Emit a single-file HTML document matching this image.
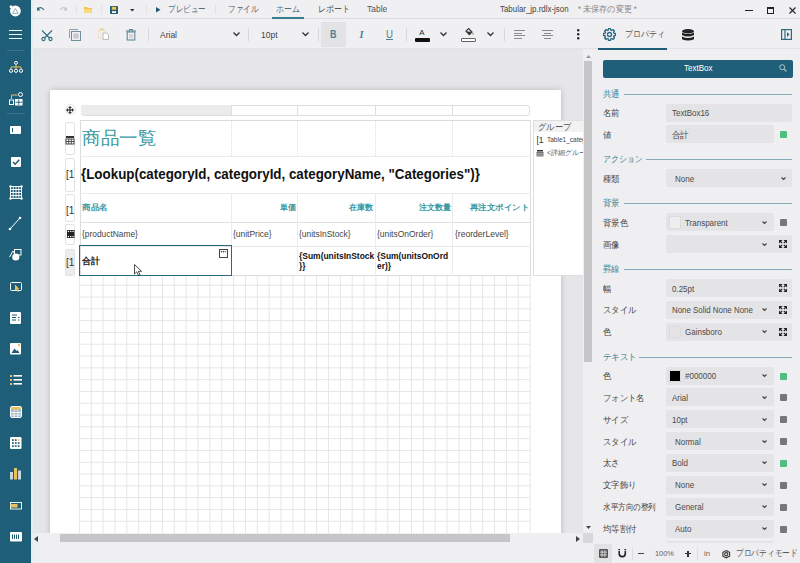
<!DOCTYPE html><html><head><meta charset="utf-8"><style>
*{box-sizing:border-box;margin:0;padding:0}
html,body{width:800px;height:563px;overflow:hidden;background:#efeef0;font-family:"Liberation Sans",sans-serif;position:relative}
.a{position:absolute}
.t{position:absolute;white-space:nowrap;line-height:1}
svg{position:absolute;overflow:visible}
</style></head><body>
<div class="a" style="left:0px;top:0px;width:31px;height:563px;background:#1f5e78"></div>
<div class="a" style="left:31px;top:0px;width:1.8px;height:563px;background:#e3eef2"></div>
<div class="a" style="left:32.8px;top:0px;width:767.2px;height:18px;background:#f0eff1"></div>
<div class="a" style="left:32.8px;top:18px;width:767.2px;height:1px;background:#dedddf"></div>
<div class="a" style="left:32.8px;top:19px;width:767.2px;height:30px;background:#f0eff1"></div>
<div class="a" style="left:32.8px;top:48px;width:767.2px;height:1px;background:#e3e2e4"></div>
<div class="a" style="left:32.8px;top:49px;width:550.2px;height:484px;background:#e6e5e7;overflow:hidden">
<div class="a" style="left:17.2px;top:41px;width:511px;height:520px;background:#fff;box-shadow:0 0 6px rgba(0,0,0,.2)"></div>
</div>
<div class="a" style="left:79px;top:276px;width:452px;height:257px;overflow:hidden"><svg style="left:0;top:0" width="460" height="260"><g stroke="#e6e6e8" stroke-width="1"><line x1="0.4000000000000057" y1="0" x2="0.4000000000000057" y2="260" /><line x1="12.260000000000005" y1="0" x2="12.260000000000005" y2="260" /><line x1="24.120000000000005" y1="0" x2="24.120000000000005" y2="260" /><line x1="35.980000000000004" y1="0" x2="35.980000000000004" y2="260" /><line x1="47.84" y1="0" x2="47.84" y2="260" /><line x1="59.69999999999999" y1="0" x2="59.69999999999999" y2="260" /><line x1="71.56" y1="0" x2="71.56" y2="260" /><line x1="83.42000000000002" y1="0" x2="83.42000000000002" y2="260" /><line x1="95.28000000000003" y1="0" x2="95.28000000000003" y2="260" /><line x1="107.14000000000004" y1="0" x2="107.14000000000004" y2="260" /><line x1="119.00000000000006" y1="0" x2="119.00000000000006" y2="260" /><line x1="130.86000000000007" y1="0" x2="130.86000000000007" y2="260" /><line x1="142.72000000000008" y1="0" x2="142.72000000000008" y2="260" /><line x1="154.5800000000001" y1="0" x2="154.5800000000001" y2="260" /><line x1="166.4400000000001" y1="0" x2="166.4400000000001" y2="260" /><line x1="178.30000000000013" y1="0" x2="178.30000000000013" y2="260" /><line x1="190.16000000000014" y1="0" x2="190.16000000000014" y2="260" /><line x1="202.02000000000015" y1="0" x2="202.02000000000015" y2="260" /><line x1="213.88000000000017" y1="0" x2="213.88000000000017" y2="260" /><line x1="225.74000000000018" y1="0" x2="225.74000000000018" y2="260" /><line x1="237.6000000000002" y1="0" x2="237.6000000000002" y2="260" /><line x1="249.4600000000002" y1="0" x2="249.4600000000002" y2="260" /><line x1="261.3200000000002" y1="0" x2="261.3200000000002" y2="260" /><line x1="273.18000000000023" y1="0" x2="273.18000000000023" y2="260" /><line x1="285.04000000000025" y1="0" x2="285.04000000000025" y2="260" /><line x1="296.90000000000026" y1="0" x2="296.90000000000026" y2="260" /><line x1="308.7600000000003" y1="0" x2="308.7600000000003" y2="260" /><line x1="320.6200000000003" y1="0" x2="320.6200000000003" y2="260" /><line x1="332.4800000000003" y1="0" x2="332.4800000000003" y2="260" /><line x1="344.3400000000003" y1="0" x2="344.3400000000003" y2="260" /><line x1="356.20000000000033" y1="0" x2="356.20000000000033" y2="260" /><line x1="368.06000000000034" y1="0" x2="368.06000000000034" y2="260" /><line x1="379.92000000000036" y1="0" x2="379.92000000000036" y2="260" /><line x1="391.78000000000037" y1="0" x2="391.78000000000037" y2="260" /><line x1="403.6400000000004" y1="0" x2="403.6400000000004" y2="260" /><line x1="415.5000000000004" y1="0" x2="415.5000000000004" y2="260" /><line x1="427.3600000000004" y1="0" x2="427.3600000000004" y2="260" /><line x1="439.22000000000037" y1="0" x2="439.22000000000037" y2="260" /><line x1="451.0800000000004" y1="0" x2="451.0800000000004" y2="260" /><line x1="0" y1="9.25" x2="451.5" y2="9.25" /><line x1="0" y1="21.05000000000001" x2="451.5" y2="21.05000000000001" /><line x1="0" y1="32.85000000000002" x2="451.5" y2="32.85000000000002" /><line x1="0" y1="44.650000000000034" x2="451.5" y2="44.650000000000034" /><line x1="0" y1="56.450000000000045" x2="451.5" y2="56.450000000000045" /><line x1="0" y1="68.25000000000006" x2="451.5" y2="68.25000000000006" /><line x1="0" y1="80.05000000000007" x2="451.5" y2="80.05000000000007" /><line x1="0" y1="91.85000000000008" x2="451.5" y2="91.85000000000008" /><line x1="0" y1="103.65000000000009" x2="451.5" y2="103.65000000000009" /><line x1="0" y1="115.4500000000001" x2="451.5" y2="115.4500000000001" /><line x1="0" y1="127.25000000000011" x2="451.5" y2="127.25000000000011" /><line x1="0" y1="139.05000000000013" x2="451.5" y2="139.05000000000013" /><line x1="0" y1="150.85000000000014" x2="451.5" y2="150.85000000000014" /><line x1="0" y1="162.65000000000015" x2="451.5" y2="162.65000000000015" /><line x1="0" y1="174.45000000000016" x2="451.5" y2="174.45000000000016" /><line x1="0" y1="186.25000000000017" x2="451.5" y2="186.25000000000017" /><line x1="0" y1="198.05000000000018" x2="451.5" y2="198.05000000000018" /><line x1="0" y1="209.8500000000002" x2="451.5" y2="209.8500000000002" /><line x1="0" y1="221.6500000000002" x2="451.5" y2="221.6500000000002" /><line x1="0" y1="233.45000000000022" x2="451.5" y2="233.45000000000022" /><line x1="0" y1="245.25000000000023" x2="451.5" y2="245.25000000000023" /></g></svg></div>
<div class="a" style="left:80.5px;top:104.5px;width:449px;height:11px;background:#fff;border:1px solid #dedede;border-radius:3px"></div>
<div class="a" style="left:81px;top:105px;width:150px;height:10px;background:#ebebeb;border-radius:2px 0 0 2px"></div>
<div class="a" style="left:231px;top:105px;width:1px;height:10px;background:#dedede"></div>
<div class="a" style="left:297px;top:105px;width:1px;height:10px;background:#dedede"></div>
<div class="a" style="left:375px;top:105px;width:1px;height:10px;background:#dedede"></div>
<div class="a" style="left:452px;top:105px;width:1px;height:10px;background:#dedede"></div>
<div class="a" style="left:64.5px;top:104px;width:11px;height:11px;border-radius:50%;border:1px solid #e2e2e2;background:#fff"></div>
<svg style="left:66px;top:105.5px" width="8" height="8" viewBox="0 0 8 8"><g fill="#333"><path d="M4 0 L6 2 H2 Z M4 8 L6 6 H2 Z M0 4 L2 2 V6 Z M8 4 L6 2 V6 Z"/><rect x="3.4" y="1.5" width="1.2" height="5"/><rect x="1.5" y="3.4" width="5" height="1.2"/></g></svg>
<div class="a" style="left:65px;top:121.5px;width:10px;height:33.5px;border:1px solid #e2e2e2;border-radius:2px;background:#fff"></div>
<div class="a" style="left:65px;top:157.5px;width:10px;height:34.5px;border:1px solid #e2e2e2;border-radius:2px;background:#fff"></div>
<div class="a" style="left:65px;top:193.5px;width:10px;height:28.0px;border:1px solid #e2e2e2;border-radius:2px;background:#fff"></div>
<div class="a" style="left:65px;top:223.8px;width:10px;height:21.19999999999999px;border:1px solid #e2e2e2;border-radius:2px;background:#fff"></div>
<div class="a" style="left:65px;top:248.5px;width:10px;height:27.0px;border:1px solid #e2e2e2;border-radius:2px;background:#ececec"></div>
<svg style="left:66px;top:136px" width="8" height="8" viewBox="0 0 8 8"><g fill="#333"><rect x="0" y="0" width="8" height="2"/><rect x="0" y="3" width="8" height="5" fill="none" stroke="#333" stroke-width="0.9"/><line x1="2.7" y1="3" x2="2.7" y2="8" stroke="#333" stroke-width="0.8"/><line x1="5.3" y1="3" x2="5.3" y2="8" stroke="#333" stroke-width="0.8"/><line x1="0" y1="5.5" x2="8" y2="5.5" stroke="#333" stroke-width="0.8"/></g></svg>
<svg style="left:66.5px;top:230px" width="7.5" height="8" viewBox="0 0 7.5 8"><rect x="0" y="0" width="7.5" height="8" fill="#222"/><g fill="#fff"><rect x="0.8" y="0.8" width="1.3" height="1.2"/><rect x="3.1" y="0.8" width="1.3" height="1.2"/><rect x="5.4" y="0.8" width="1.3" height="1.2"/><rect x="0.8" y="6" width="1.3" height="1.2"/><rect x="3.1" y="6" width="1.3" height="1.2"/><rect x="5.4" y="6" width="1.3" height="1.2"/></g></svg>
<div class="t" style="left:66px;top:169.5px;font-size:10px;color:#333;">[1</div>
<div class="t" style="left:66px;top:205.5px;font-size:10px;color:#333;">[1</div>
<div class="t" style="left:66px;top:257.5px;font-size:10px;color:#333;">[1</div>
<div class="a" style="left:79.5px;top:119.5px;width:451.0px;height:156.5px;border:1px solid #dcdcdc"></div>
<div class="a" style="left:79.5px;top:155.5px;width:451.0px;height:1px;background:#ebebeb"></div>
<div class="a" style="left:79.5px;top:192.5px;width:451.0px;height:1px;background:#ebebeb"></div>
<div class="a" style="left:79.5px;top:221.5px;width:451.0px;height:1px;background:#e0e0e0"></div>
<div class="a" style="left:79.5px;top:245.5px;width:451.0px;height:1px;background:#e6e6e6"></div>
<div class="a" style="left:231px;top:119.5px;width:0px;height:36px;border-left:1px dotted #dcdcdc"></div>
<div class="a" style="left:231px;top:192.5px;width:1px;height:83.5px;background:#ececec"></div>
<div class="a" style="left:297px;top:119.5px;width:0px;height:36px;border-left:1px dotted #dcdcdc"></div>
<div class="a" style="left:297px;top:192.5px;width:1px;height:83.5px;background:#ececec"></div>
<div class="a" style="left:375px;top:119.5px;width:0px;height:36px;border-left:1px dotted #dcdcdc"></div>
<div class="a" style="left:375px;top:192.5px;width:1px;height:83.5px;background:#ececec"></div>
<div class="a" style="left:452px;top:119.5px;width:0px;height:36px;border-left:1px dotted #dcdcdc"></div>
<div class="a" style="left:452px;top:192.5px;width:1px;height:83.5px;background:#ececec"></div>
<div class="t" style="left:81.5px;top:129.3px;font-size:18px;color:#3a99a2;transform:scaleX(1.03);transform-origin:0 0;">商品一覧</div>
<div class="t" style="left:81px;top:165.5px;font-size:15px;color:#111;transform:scaleX(0.891);transform-origin:0 0;font-weight:bold">{Lookup(categoryId, categoryId, categoryName, "Categories")}</div>
<div class="t" style="left:81.5px;top:203px;font-size:8.3px;color:#3a99a2;transform:scaleX(1.08);transform-origin:0 0;font-weight:bold">商品名</div>
<div class="t" style="left:232px;top:203px;width:63.5px;text-align:right;font-size:8.3px;color:#3a99a2;font-weight:bold">単価</div>
<div class="t" style="left:298px;top:203px;width:75px;text-align:right;font-size:8.3px;color:#3a99a2;font-weight:bold">在庫数</div>
<div class="t" style="left:376px;top:203px;width:74.5px;text-align:right;font-size:8.3px;color:#3a99a2;font-weight:bold">注文数量</div>
<div class="t" style="left:470px;top:203px;font-size:8.3px;color:#3a99a2;transform:scaleX(1.06);transform-origin:0 0;font-weight:bold">再注文ポイント</div>
<div class="t" style="left:81.5px;top:229.5px;font-size:9px;color:#444;transform:scaleX(0.93);transform-origin:0 0;">{productName}</div>
<div class="t" style="left:233px;top:229.5px;font-size:9px;color:#444;transform:scaleX(0.94);transform-origin:0 0;">{unitPrice}</div>
<div class="t" style="left:299.4px;top:229.5px;font-size:9px;color:#444;transform:scaleX(0.937);transform-origin:0 0;">{unitsInStock}</div>
<div class="t" style="left:377px;top:229.5px;font-size:9px;color:#444;transform:scaleX(0.94);transform-origin:0 0;">{unitsOnOrder}</div>
<div class="t" style="left:454.5px;top:229.5px;font-size:9px;color:#444;transform:scaleX(0.95);transform-origin:0 0;">{reorderLevel}</div>
<div class="t" style="left:81.5px;top:256.8px;font-size:8.6px;color:#111;font-weight:bold">合計</div>
<div class="t" style="left:299.4px;top:251.5px;font-size:9px;color:#111;transform:scaleX(0.94);transform-origin:0 0;font-weight:bold">{Sum(unitsInStock</div>
<div class="t" style="left:299.4px;top:261.5px;font-size:9px;color:#111;transform:scaleX(0.94);transform-origin:0 0;font-weight:bold">}}</div>
<div class="t" style="left:377px;top:251.5px;font-size:9px;color:#111;transform:scaleX(0.935);transform-origin:0 0;font-weight:bold">{Sum(unitsOnOrd</div>
<div class="t" style="left:377px;top:261.5px;font-size:9px;color:#111;transform:scaleX(0.935);transform-origin:0 0;font-weight:bold">er)}</div>
<div class="a" style="left:79.2px;top:244.8px;width:152.6px;height:31.2px;border:1.6px solid #2a6a80"></div>
<svg style="left:219px;top:249px" width="9" height="9" viewBox="0 0 9 9"><rect x="0.5" y="0.5" width="8" height="8" fill="#fff" stroke="#444" stroke-width="1"/><circle cx="2.5" cy="2.7" r="0.75" fill="#333"/><circle cx="4.5" cy="2.7" r="0.75" fill="#333"/><rect x="5.7" y="2.2" width="1.6" height="1" fill="#666"/></svg>
<svg style="left:134px;top:264px" width="8" height="12" viewBox="0 0 8 12"><path d="M0.5 0.5 L0.5 10 L2.8 7.8 L4.5 11.5 L6 10.8 L4.4 7.3 L7.5 7.3 Z" fill="#fff" stroke="#222" stroke-width="0.8"/></svg>
<div class="a" style="left:533px;top:119.5px;width:50px;height:156px;overflow:hidden;background:#fff;border:1px solid #dedede;border-right:0">
<div class="a" style="left:0px;top:0px;width:49px;height:11px;background:#f2f2f2"></div>
<div class="t" style="left:3.5px;top:2.2px;font-size:8.5px;color:#555;transform:scaleX(0.92);transform-origin:0 0;">グループ</div>
<div class="t" style="left:2.5px;top:15px;font-size:8.5px;color:#333;">[1</div>
<div class="t" style="left:13px;top:16.3px;font-size:6.5px;color:#444;">Table1_categ</div>
<svg style="left:2.5px;top:29.5px" width="6.0" height="6.0" viewBox="0 0 8 8"><g fill="#333"><rect x="0" y="0" width="8" height="2"/><rect x="0" y="3" width="8" height="5" fill="none" stroke="#333" stroke-width="0.9"/><line x1="2.7" y1="3" x2="2.7" y2="8" stroke="#333" stroke-width="0.8"/><line x1="5.3" y1="3" x2="5.3" y2="8" stroke="#333" stroke-width="0.8"/><line x1="0" y1="5.5" x2="8" y2="5.5" stroke="#333" stroke-width="0.8"/></g></svg>
<div class="t" style="left:13px;top:29.3px;font-size:6.5px;color:#555;">&lt;詳細グループ&gt;</div>
</div>
<div class="a" style="left:32.8px;top:533px;width:550.2px;height:10px;background:#efeef0"></div>
<div class="a" style="left:59.5px;top:534px;width:450px;height:8px;background:#c6c5c7"></div>
<svg style="left:34px;top:535.5px" width="4" height="6" viewBox="0 0 4 6"><path d="M4 0 L0 3 L4 6Z" fill="#444"/></svg>
<svg style="left:576px;top:535.5px" width="4" height="6" viewBox="0 0 4 6"><path d="M0 0 L4 3 L0 6Z" fill="#444"/></svg>
<div class="a" style="left:583px;top:49px;width:10px;height:494px;background:#efeef0"></div>
<div class="a" style="left:584px;top:60.8px;width:8px;height:301px;background:#c6c5c7"></div>
<svg style="left:586px;top:54.5px" width="5" height="3" viewBox="0 0 5 3"><path d="M0 3 L2.5 0 L5 3Z" fill="#999"/></svg>
<svg style="left:586px;top:526px" width="5" height="3" viewBox="0 0 5 3"><path d="M0 0 L2.5 3 L5 0Z" fill="#444"/></svg>
<div class="a" style="left:583px;top:533px;width:10px;height:10px;background:#d8d7d9"></div>
<svg style="left:8px;top:3px" width="15" height="15" viewBox="0 0 15 15"><circle cx="7.4" cy="8" r="5.4" fill="#fff"/><circle cx="3.1" cy="3.7" r="1.5" fill="#fff"/><path d="M4.6 10.3 L7.4 5.6 L10.2 10.3 Z" fill="none" stroke="#6f9aab" stroke-width="0.8" stroke-linejoin="round"/></svg>
<div class="a" style="left:9px;top:29.5px;width:13px;height:1.8px;background:#fff"></div>
<div class="a" style="left:9px;top:33.5px;width:13px;height:1.8px;background:#fff"></div>
<div class="a" style="left:9px;top:37.5px;width:13px;height:1.8px;background:#fff"></div>
<div class="a" style="left:7px;top:50px;width:18px;height:1px;background:#3d7389"></div>
<div class="a" style="left:7px;top:113px;width:18px;height:1px;background:#3d7389"></div>
<svg style="left:8.5px;top:60.5px" width="14" height="12" viewBox="0 0 14 12"><g fill="none" stroke="#fff" stroke-width="1"><circle cx="7" cy="1.8" r="1.5"/><circle cx="2" cy="9.8" r="1.6"/><circle cx="7" cy="9.8" r="1.6"/><circle cx="12" cy="9.8" r="1.6"/><path d="M7 3.3 V6 M2 8.2 V6 H12 V8.2 M7 6 V8.2" stroke="#e8c25a"/></g></svg>
<svg style="left:8.5px;top:91.5px" width="14" height="13" viewBox="0 0 14 13"><g fill="none" stroke="#fff" stroke-width="1"><circle cx="11.5" cy="2.5" r="2"/><rect x="0.5" y="8" width="4" height="4.5"/><rect x="6.5" y="7.5" width="6.5" height="5.5" fill="#fff"/><path d="M2.5 7 V3 H8.5" stroke="#e8c25a"/></g><g stroke="#1e5b74" stroke-width="0.9"><line x1="9.75" y1="7.5" x2="9.75" y2="13"/><line x1="6.5" y1="10.25" x2="13" y2="10.25"/></g></svg>
<div class="a" style="left:9.5px;top:126px;width:11.5px;height:8px;background:#fff;border-radius:1px"></div>
<div class="a" style="left:12px;top:128px;width:1px;height:4px;background:#1e5b74"></div>
<svg style="left:10.5px;top:156.5px" width="10" height="10" viewBox="0 0 10 10"><rect x="0" y="0" width="10" height="10" rx="1" fill="#fff"/><path d="M2 5 L4.2 7.2 L8.2 2.8" fill="none" stroke="#1e5b74" stroke-width="1.5"/></svg>
<svg style="left:9.5px;top:185.5px" width="12" height="13" viewBox="0 0 12 13"><g stroke="#fff" stroke-width="0.9" fill="none"><rect x="0.5" y="0.5" width="11" height="12"/><line x1="3.2" y1="0" x2="3.2" y2="13"/><line x1="6" y1="0" x2="6" y2="13"/><line x1="8.8" y1="0" x2="8.8" y2="13"/><line x1="0" y1="3.5" x2="12" y2="3.5"/><line x1="0" y1="6.5" x2="12" y2="6.5"/><line x1="0" y1="9.5" x2="12" y2="9.5"/></g><g fill="#fff"><circle cx="0.5" cy="0.5" r="1.2"/><circle cx="11.5" cy="0.5" r="1.2"/><circle cx="0.5" cy="12.5" r="1.2"/><circle cx="11.5" cy="12.5" r="1.2"/></g></svg>
<svg style="left:9px;top:217px" width="12" height="13" viewBox="0 0 12 13"><line x1="1" y1="12" x2="11" y2="1" stroke="#fff" stroke-width="1"/><circle cx="1" cy="12" r="1.3" fill="#fff"/><circle cx="11" cy="1" r="1.3" fill="#fff"/></svg>
<svg style="left:9px;top:249px" width="13" height="12" viewBox="0 0 13 12"><path d="M0.5 8 L4 2 L7 7" fill="none" stroke="#fff" stroke-width="1"/><rect x="5.5" y="0.5" width="6.5" height="5.5" fill="none" stroke="#fff" stroke-width="1"/><circle cx="6.8" cy="8" r="3.6" fill="#fff"/></svg>
<svg style="left:9.5px;top:281.5px" width="12" height="10" viewBox="0 0 12 10"><rect x="0.5" y="0.5" width="11" height="8" rx="1" fill="none" stroke="#fff" stroke-width="1"/><path d="M5 2.5 L5 9 L6.5 7.6 L7.8 10 L8.8 9.5 L7.6 7.2 L9.5 7 Z" fill="#e8c25a"/></svg>
<svg style="left:10px;top:312px" width="11" height="12" viewBox="0 0 11 12"><rect x="0" y="0" width="11" height="12" rx="1" fill="#fff"/><g stroke="#1e5b74" stroke-width="1"><line x1="2" y1="3" x2="7" y2="3"/><line x1="2" y1="5.5" x2="6" y2="5.5"/><line x1="2" y1="8" x2="6" y2="8"/><line x1="8" y1="5.5" x2="9.5" y2="5.5"/><line x1="8" y1="8" x2="9.5" y2="8"/></g></svg>
<svg style="left:10px;top:343px" width="11" height="11.5" viewBox="0 0 11 11.5"><rect x="0" y="0" width="11" height="11.5" rx="1" fill="#fff"/><path d="M1.5 10 L4.5 5.5 L6.5 8 L7.5 7 L9.5 10 Z" fill="#1e5b74"/><circle cx="9" cy="2" r="1.2" fill="#e8c25a"/></svg>
<svg style="left:9.5px;top:375px" width="12" height="10" viewBox="0 0 12 10"><g fill="#e8c25a"><rect x="0" y="0" width="2" height="2"/><rect x="0" y="4" width="2" height="2"/><rect x="0" y="8" width="2" height="2"/></g><g fill="#fff"><rect x="3.5" y="0" width="8.5" height="1.6"/><rect x="3.5" y="4" width="8.5" height="1.6"/><rect x="3.5" y="8" width="8.5" height="1.6"/></g></svg>
<svg style="left:9.5px;top:405.5px" width="12" height="12" viewBox="0 0 12 12"><rect x="0.5" y="0.5" width="11" height="11" rx="1.2" fill="#9fb9c4" stroke="#fff" stroke-width="1"/><rect x="1" y="1" width="10" height="2.5" fill="#e8c25a"/><g stroke="#fff" stroke-width="0.8"><line x1="4.2" y1="3.5" x2="4.2" y2="11"/><line x1="7.8" y1="3.5" x2="7.8" y2="11"/><line x1="1" y1="6.5" x2="11" y2="6.5"/><line x1="1" y1="9" x2="11" y2="9"/></g></svg>
<svg style="left:10px;top:436.5px" width="11.5" height="12" viewBox="0 0 11.5 12"><rect x="0" y="0" width="11.5" height="12" rx="1.2" fill="#fff"/><g fill="#1e5b74"><rect x="2" y="2.2" width="1.7" height="1.7"/><rect x="4.9" y="2.2" width="1.7" height="1.7"/><rect x="2" y="5.2" width="1.7" height="1.7"/><rect x="4.9" y="5.2" width="1.7" height="1.7"/><rect x="7.8" y="5.2" width="1.7" height="1.7"/><rect x="2" y="8.2" width="1.7" height="1.7"/><rect x="4.9" y="8.2" width="1.7" height="1.7"/><rect x="7.8" y="8.2" width="1.7" height="1.7"/></g><rect x="7.8" y="2.2" width="1.7" height="1.7" fill="#e8c25a"/></svg>
<svg style="left:10px;top:468px" width="11.5" height="11.5" viewBox="0 0 11.5 11.5"><rect x="0" y="4" width="3" height="7.5" fill="#c9d6dc"/><rect x="4" y="0" width="3" height="11.5" fill="#e8c25a"/><rect x="8" y="2.5" width="3" height="9" fill="#c9d6dc"/></svg>
<svg style="left:9.5px;top:501.5px" width="12" height="7.5" viewBox="0 0 12 7.5"><rect x="0.5" y="0.5" width="11" height="6.5" fill="none" stroke="#fff" stroke-width="0.9"/><rect x="0.5" y="2" width="7" height="3.5" fill="#e8c25a"/></svg>
<svg style="left:9.5px;top:531.5px" width="12" height="9.5" viewBox="0 0 12 9.5"><rect x="0" y="0" width="12" height="9.5" rx="1" fill="#fff"/><g fill="#1e5b74"><rect x="2" y="2.5" width="1" height="4.5"/><rect x="4" y="2.5" width="1" height="4.5"/><rect x="6" y="2.5" width="1" height="4.5"/><rect x="8" y="2.5" width="1" height="4.5"/></g></svg>
<svg style="left:37px;top:6px" width="8" height="6" viewBox="0 0 8 6"><path d="M1 3 Q4 0 7 4" fill="none" stroke="#2b6a82" stroke-width="1.2"/><path d="M0 1 L0 4.5 L3.5 4.5 Z" fill="#2b6a82"/></svg>
<svg style="left:59px;top:6px" width="8" height="6" viewBox="0 0 8 6"><path d="M7 3 Q4 0 1 4" fill="none" stroke="#bcc8cd" stroke-width="1.2"/><path d="M8 1 L8 4.5 L4.5 4.5 Z" fill="#bcc8cd"/></svg>
<div class="a" style="left:75.5px;top:5px;width:1px;height:9px;background:#e2e1e3"></div>
<svg style="left:84px;top:6px" width="8.5" height="7" viewBox="0 0 8.5 7"><path d="M0 1 H3 L4 2 H8 V7 H0 Z" fill="#f2c14e"/><path d="M0 3 H8.5 L7.5 7 H0 Z" fill="#f7d77f"/></svg>
<div class="a" style="left:101px;top:5px;width:1px;height:9px;background:#e2e1e3"></div>
<svg style="left:110px;top:5.5px" width="8" height="8" viewBox="0 0 8 8"><rect x="0" y="0" width="8" height="8" rx="0.8" fill="#1e5b74"/><rect x="1.8" y="0.8" width="4.4" height="3" fill="#f2c14e"/><rect x="2" y="5.2" width="4" height="1.8" fill="#fff"/></svg>
<svg style="left:130px;top:8.5px" width="4.5" height="3" viewBox="0 0 4.5 3"><path d="M0 0 H4.5 L2.25 2.6Z" fill="#333"/></svg>
<div class="a" style="left:145.5px;top:5px;width:1px;height:9px;background:#e2e1e3"></div>
<svg style="left:156px;top:7px" width="4.5" height="5.5" viewBox="0 0 4.5 5.5"><path d="M0 0 L4.5 2.75 L0 5.5Z" fill="#1e5b74"/></svg>
<div class="t" style="left:167.5px;top:5px;font-size:8.5px;color:#4f6f7b;transform:scaleX(0.84);transform-origin:0 0;">プレビュー</div>
<div class="a" style="left:215px;top:5px;width:1px;height:9px;background:#e2e1e3"></div>
<div class="t" style="left:228px;top:5px;font-size:8.5px;color:#555;transform:scaleX(0.84);transform-origin:0 0;">ファイル</div>
<div class="t" style="left:276px;top:5px;font-size:8.5px;color:#4d6f7c;transform:scaleX(0.88);transform-origin:0 0;">ホーム</div>
<div class="a" style="left:272px;top:17px;width:32px;height:2px;background:#3a7a8e"></div>
<div class="t" style="left:318px;top:5px;font-size:8.5px;color:#555;transform:scaleX(0.9);transform-origin:0 0;">レポート</div>
<div class="t" style="left:367px;top:5px;font-size:8.5px;color:#555;">Table</div>
<div class="t" style="left:500px;top:5px;font-size:8.5px;color:#444;transform:scaleX(0.93);transform-origin:0 0;">Tabular_jp.rdlx-json</div>
<div class="t" style="left:578px;top:5px;font-size:8.5px;color:#888;transform:scaleX(0.9);transform-origin:0 0;">* 未保存の変更 *</div>
<div class="a" style="left:745px;top:9.5px;width:7.5px;height:1.8px;background:#222"></div>
<div class="a" style="left:767px;top:6.5px;width:7px;height:7px;border:1.2px solid #222;border-top-width:2px"></div>
<svg style="left:789px;top:6.5px" width="7" height="7" viewBox="0 0 7 7"><path d="M0.5 0.5 L6.5 6.5 M6.5 0.5 L0.5 6.5" stroke="#222" stroke-width="1.1"/></svg>
<svg style="left:41px;top:29.5px" width="12" height="11" viewBox="0 0 12 11"><g fill="none" stroke="#2b6a82" stroke-width="1.1"><path d="M1 0.5 L8.5 8"/><path d="M11 0.5 L3.5 8"/><circle cx="2.5" cy="9" r="1.6"/><circle cx="9.5" cy="9" r="1.6"/></g></svg>
<svg style="left:69px;top:29px" width="12" height="12" viewBox="0 0 12 12"><g fill="none" stroke="#8aa3ad" stroke-width="1"><path d="M0.5 9 V0.5 H9"/><rect x="2.5" y="2.5" width="9" height="9" stroke="#6f909c"/></g><rect x="4.5" y="4.5" width="5" height="5" fill="#c9c9cb"/></svg>
<svg style="left:97.5px;top:28px" width="11" height="12" viewBox="0 0 11 12"><rect x="0.5" y="2" width="7" height="8" fill="none" stroke="#e8d49a" stroke-width="1" stroke-dasharray="1 1"/><rect x="2" y="0.5" width="4" height="2" fill="#e8d49a"/><path d="M5 5 H8.5 L10.5 7 V11.5 H5 Z" fill="#fff" stroke="#b4b4b6" stroke-width="0.9"/></svg>
<svg style="left:126px;top:28.5px" width="10" height="11.5" viewBox="0 0 10 11.5"><g fill="none" stroke="#5f8a99" stroke-width="1.1"><path d="M0 2 H10"/><path d="M3.5 2 V0.5 H6.5 V2"/><rect x="1.2" y="3" width="7.6" height="8"/></g><rect x="3" y="5" width="4" height="4.5" fill="#d5d5d7"/></svg>
<div class="a" style="left:147.5px;top:28px;width:1px;height:13px;background:#d8d7d9"></div>
<div class="t" style="left:160px;top:31px;font-size:8.5px;color:#444;">Arial</div>
<svg style="left:232.5px;top:31.5px" width="7" height="4" viewBox="0 0 7 4"><path d="M0.5 0.5 L3.5 3.5 L6.5 0.5" fill="none" stroke="#333" stroke-width="1.3"/></svg>
<div class="a" style="left:248px;top:28px;width:1px;height:13px;background:#d8d7d9"></div>
<div class="t" style="left:261px;top:31px;font-size:8.5px;color:#444;">10pt</div>
<svg style="left:302px;top:31.5px" width="7" height="4" viewBox="0 0 7 4"><path d="M0.5 0.5 L3.5 3.5 L6.5 0.5" fill="none" stroke="#333" stroke-width="1.3"/></svg>
<div class="a" style="left:317.5px;top:28px;width:1px;height:13px;background:#d8d7d9"></div>
<div class="a" style="left:321px;top:22px;width:25px;height:25px;background:#e3e2e4"></div>
<div class="t" style="left:330px;top:29.6px;font-size:10.2px;color:#4f8092;transform:scaleX(0.88);transform-origin:0 0;font-weight:bold">B</div>
<div class="t" style="left:359.5px;top:29.6px;font-size:10.2px;color:#4f8092;font-family:Liberation Serif;font-weight:bold"><i>I</i></div>
<div class="t" style="left:386px;top:29.6px;font-size:10.2px;color:#4f8092;transform:scaleX(0.95);transform-origin:0 0;"><u>U</u></div>
<div class="a" style="left:406px;top:28px;width:1px;height:13px;background:#d8d7d9"></div>
<div class="t" style="left:419.2px;top:28.8px;font-size:7.8px;color:#222;">A</div>
<div class="a" style="left:414.5px;top:38px;width:15px;height:4px;background:#111;border-radius:1px"></div>
<svg style="left:440px;top:32px" width="7" height="4" viewBox="0 0 7 4"><path d="M0.5 0.5 L3.5 3.5 L6.5 0.5" fill="none" stroke="#333" stroke-width="1.3"/></svg>
<svg style="left:464.5px;top:28px" width="9" height="7.5" viewBox="0 0 9 7.5"><path d="M1 3.2 L3.6 0.6 L7 4 L4.4 6.6 Z" fill="none" stroke="#333" stroke-width="1.1"/><path d="M1.3 3.5 L6.6 3.8 L4.4 6.3 Z" fill="#333"/><path d="M8 4.5 Q9 6.2 8 6.8 Q7 6.2 8 4.5Z" fill="#333"/></svg>
<div class="a" style="left:461px;top:38px;width:15px;height:4px;border:1px solid #666;border-radius:1px;background:#fff"></div>
<svg style="left:486.5px;top:32px" width="7" height="4" viewBox="0 0 7 4"><path d="M0.5 0.5 L3.5 3.5 L6.5 0.5" fill="none" stroke="#333" stroke-width="1.3"/></svg>
<div class="a" style="left:504px;top:28px;width:1px;height:13px;background:#d8d7d9"></div>
<div class="a" style="left:514px;top:29.9px;width:11px;height:1.2px;background:#8a8a8a"></div>
<div class="a" style="left:514px;top:32.55px;width:7.5px;height:1.2px;background:#8a8a8a"></div>
<div class="a" style="left:514px;top:35.199999999999996px;width:11px;height:1.2px;background:#8a8a8a"></div>
<div class="a" style="left:514px;top:37.849999999999994px;width:7.5px;height:1.2px;background:#8a8a8a"></div>
<div class="a" style="left:542.0px;top:29.9px;width:11px;height:1.2px;background:#8a8a8a"></div>
<div class="a" style="left:544.0px;top:32.55px;width:7px;height:1.2px;background:#8a8a8a"></div>
<div class="a" style="left:542.0px;top:35.199999999999996px;width:11px;height:1.2px;background:#8a8a8a"></div>
<div class="a" style="left:544.0px;top:37.849999999999994px;width:7px;height:1.2px;background:#8a8a8a"></div>
<svg style="left:576.5px;top:29.4px" width="2.4" height="2.4" viewBox="0 0 2.4 2.4"><circle cx="1.2" cy="1.2" r="1.2" fill="#222"/></svg>
<svg style="left:576.5px;top:33px" width="2.4" height="2.4" viewBox="0 0 2.4 2.4"><circle cx="1.2" cy="1.2" r="1.2" fill="#222"/></svg>
<svg style="left:576.5px;top:36.6px" width="2.4" height="2.4" viewBox="0 0 2.4 2.4"><circle cx="1.2" cy="1.2" r="1.2" fill="#222"/></svg>
<svg style="left:603px;top:28px" width="13" height="13" viewBox="0 0 13 13"><g fill="none" stroke="#2b6a82" stroke-width="1.3" stroke-linejoin="round"><path d="M10.93 5.27 L12.41 5.45 L12.41 7.55 L10.93 7.73 L10.50 8.76 L11.42 9.93 L9.93 11.42 L8.76 10.50 L7.73 10.93 L7.55 12.41 L5.45 12.41 L5.27 10.93 L4.24 10.50 L3.07 11.42 L1.58 9.93 L2.50 8.76 L2.07 7.73 L0.59 7.55 L0.59 5.45 L2.07 5.27 L2.50 4.24 L1.58 3.07 L3.07 1.58 L4.24 2.50 L5.27 2.07 L5.45 0.59 L7.55 0.59 L7.73 2.07 L8.76 2.50 L9.93 1.58 L11.42 3.07 L10.50 4.24Z"/><circle cx="6.5" cy="6.5" r="2"/></g></svg>
<div class="t" style="left:625px;top:30px;font-size:9px;color:#555;transform:scaleX(0.885);transform-origin:0 0;">プロパティ</div>
<svg style="left:681.5px;top:28.5px" width="12" height="12.5" viewBox="0 0 12 12.5"><g fill="#222"><ellipse cx="6" cy="2.2" rx="6" ry="2.2"/><path d="M0 3.5 Q6 6.5 12 3.5 V6 Q6 9 0 6Z"/><path d="M0 7.5 Q6 10.5 12 7.5 V10.2 Q6 13 0 10.2Z"/></g></svg>
<div class="a" style="left:598px;top:48px;width:69px;height:2px;background:#1e5b74"></div>
<svg style="left:781px;top:29px" width="11" height="11" viewBox="0 0 11 11"><rect x="0.6" y="0.6" width="9.8" height="9.8" fill="none" stroke="#2b6a82" stroke-width="1.2"/><line x1="4" y1="0.6" x2="4" y2="10.4" stroke="#2b6a82" stroke-width="1.2"/><path d="M6 3 L8.5 5.5 L6 8Z" fill="#2b6a82"/></svg>
<div class="a" style="left:602.5px;top:59.5px;width:190px;height:18px;background:#1f5f79;border-radius:2px"></div>
<div class="t" style="left:683.8px;top:64.2px;font-size:8.5px;color:#fff;transform:scaleX(0.94);transform-origin:0 0;">TextBox</div>
<svg style="left:779px;top:64px" width="8" height="8" viewBox="0 0 8 8"><circle cx="3.2" cy="3.2" r="2.5" fill="none" stroke="#a8c4cf" stroke-width="1"/><line x1="5" y1="5" x2="7.5" y2="7.5" stroke="#a8c4cf" stroke-width="1.1"/></svg>
<div class="t" style="left:603px;top:90.3px;font-size:8.5px;color:#3a8296;transform:scaleX(0.93);transform-origin:0 0;">共通</div>
<div class="a" style="left:624px;top:94px;width:168px;height:1px;background:#86aab7"></div>
<div class="t" style="left:603px;top:109.3px;font-size:8.5px;color:#444;transform:scaleX(0.93);transform-origin:0 0;">名前</div>
<div class="a" style="left:665.5px;top:103.5px;width:126.5px;height:18px;background:#e4e3e5;border-radius:2px"></div>
<div class="t" style="left:672px;top:109.1px;font-size:8.5px;color:#4a4a4a;transform:scaleX(0.94);transform-origin:0 0;">TextBox16</div>
<div class="t" style="left:603px;top:130.8px;font-size:8.5px;color:#444;transform:scaleX(0.93);transform-origin:0 0;">値</div>
<div class="a" style="left:665.5px;top:125px;width:108.2px;height:18px;background:#e4e3e5;border-radius:2px"></div>
<div class="t" style="left:672px;top:130.6px;font-size:8.5px;color:#4a4a4a;transform:scaleX(0.94);transform-origin:0 0;">合計</div>
<div class="a" style="left:780px;top:131px;width:7px;height:7px;background:#4fbf80;border-radius:1px"></div>
<div class="t" style="left:603px;top:155.3px;font-size:8.5px;color:#3a8296;transform:scaleX(0.88);transform-origin:0 0;">アクション</div>
<div class="a" style="left:646px;top:159px;width:146px;height:1px;background:#86aab7"></div>
<div class="t" style="left:603px;top:174.8px;font-size:8.5px;color:#444;transform:scaleX(0.93);transform-origin:0 0;">種類</div>
<div class="a" style="left:665.5px;top:169px;width:126.5px;height:18px;background:#e4e3e5;border-radius:2px"></div>
<div class="t" style="left:675px;top:174.6px;font-size:8.5px;color:#4a4a4a;transform:scaleX(0.94);transform-origin:0 0;">None</div>
<svg style="left:781px;top:176.5px" width="5" height="3" viewBox="0 0 5 3"><path d="M0.5 0.5 L2.5 2.5 L4.5 0.5" fill="none" stroke="#444" stroke-width="1.1"/></svg>
<div class="t" style="left:603px;top:199.3px;font-size:8.5px;color:#3a8296;transform:scaleX(0.93);transform-origin:0 0;">背景</div>
<div class="a" style="left:624px;top:203px;width:168px;height:1px;background:#86aab7"></div>
<div class="t" style="left:603px;top:218.8px;font-size:8.5px;color:#444;transform:scaleX(0.93);transform-origin:0 0;">背景色</div>
<div class="a" style="left:665.5px;top:213px;width:108.2px;height:18px;background:#e4e3e5;border-radius:2px"></div>
<div class="a" style="left:668.5px;top:216px;width:12.5px;height:12.5px;background:#efeeef;border:1px solid #dcdcdc;border-radius:1px"></div>
<div class="t" style="left:684.5px;top:218.6px;font-size:8.5px;color:#4a4a4a;transform:scaleX(0.94);transform-origin:0 0;">Transparent</div>
<svg style="left:761.5px;top:220.5px" width="5" height="3" viewBox="0 0 5 3"><path d="M0.5 0.5 L2.5 2.5 L4.5 0.5" fill="none" stroke="#444" stroke-width="1.1"/></svg>
<div class="a" style="left:780px;top:219px;width:7px;height:7px;background:#777;border-radius:1px"></div>
<div class="t" style="left:603px;top:240.8px;font-size:8.5px;color:#444;transform:scaleX(0.93);transform-origin:0 0;">画像</div>
<div class="a" style="left:665.5px;top:235px;width:126.5px;height:18px;background:#e4e3e5;border-radius:2px"></div>
<svg style="left:761.5px;top:242.5px" width="5" height="3" viewBox="0 0 5 3"><path d="M0.5 0.5 L2.5 2.5 L4.5 0.5" fill="none" stroke="#444" stroke-width="1.1"/></svg>
<svg style="left:779px;top:240.2px" width="8" height="8" viewBox="0 0 8 8"><g fill="#222"><path d="M0 0 H3.6 L0 3.6Z M8 0 V3.6 L4.4 0Z M8 8 H4.4 L8 4.4Z M0 8 V4.4 L3.6 8Z"/></g><g stroke="#222" stroke-width="1.1"><path d="M1 1 L3.2 3.2 M7 1 L4.8 3.2 M7 7 L4.8 4.8 M1 7 L3.2 4.8"/></g></svg>
<div class="t" style="left:603px;top:265.3px;font-size:8.5px;color:#3a8296;transform:scaleX(0.93);transform-origin:0 0;">罫線</div>
<div class="a" style="left:624px;top:269px;width:168px;height:1px;background:#86aab7"></div>
<div class="t" style="left:603px;top:284.8px;font-size:8.5px;color:#444;transform:scaleX(0.93);transform-origin:0 0;">幅</div>
<div class="a" style="left:665.5px;top:279px;width:126.5px;height:18px;background:#e4e3e5;border-radius:2px"></div>
<div class="t" style="left:672px;top:284.6px;font-size:8.5px;color:#4a4a4a;transform:scaleX(0.94);transform-origin:0 0;">0.25pt</div>
<svg style="left:779px;top:284.2px" width="8" height="8" viewBox="0 0 8 8"><g fill="#222"><path d="M0 0 H3.6 L0 3.6Z M8 0 V3.6 L4.4 0Z M8 8 H4.4 L8 4.4Z M0 8 V4.4 L3.6 8Z"/></g><g stroke="#222" stroke-width="1.1"><path d="M1 1 L3.2 3.2 M7 1 L4.8 3.2 M7 7 L4.8 4.8 M1 7 L3.2 4.8"/></g></svg>
<div class="t" style="left:603px;top:306.3px;font-size:8.5px;color:#444;transform:scaleX(0.93);transform-origin:0 0;">スタイル</div>
<div class="a" style="left:665.5px;top:300.5px;width:126.5px;height:18px;background:#e4e3e5;border-radius:2px"></div>
<div class="t" style="left:672px;top:306.1px;font-size:8.5px;color:#4a4a4a;transform:scaleX(0.93);transform-origin:0 0;">None Solid None None</div>
<svg style="left:761.5px;top:308.0px" width="5" height="3" viewBox="0 0 5 3"><path d="M0.5 0.5 L2.5 2.5 L4.5 0.5" fill="none" stroke="#444" stroke-width="1.1"/></svg>
<svg style="left:779px;top:305.7px" width="8" height="8" viewBox="0 0 8 8"><g fill="#222"><path d="M0 0 H3.6 L0 3.6Z M8 0 V3.6 L4.4 0Z M8 8 H4.4 L8 4.4Z M0 8 V4.4 L3.6 8Z"/></g><g stroke="#222" stroke-width="1.1"><path d="M1 1 L3.2 3.2 M7 1 L4.8 3.2 M7 7 L4.8 4.8 M1 7 L3.2 4.8"/></g></svg>
<div class="t" style="left:603px;top:328.3px;font-size:8.5px;color:#444;transform:scaleX(0.93);transform-origin:0 0;">色</div>
<div class="a" style="left:665.5px;top:322.5px;width:126.5px;height:18px;background:#e4e3e5;border-radius:2px"></div>
<div class="a" style="left:668.5px;top:325.5px;width:12.5px;height:12.5px;background:#e4e3e5;border:1px solid #dcdcdc;border-radius:1px"></div>
<div class="t" style="left:684.5px;top:328.1px;font-size:8.5px;color:#4a4a4a;transform:scaleX(0.94);transform-origin:0 0;">Gainsboro</div>
<svg style="left:761.5px;top:330.0px" width="5" height="3" viewBox="0 0 5 3"><path d="M0.5 0.5 L2.5 2.5 L4.5 0.5" fill="none" stroke="#444" stroke-width="1.1"/></svg>
<svg style="left:779px;top:327.7px" width="8" height="8" viewBox="0 0 8 8"><g fill="#222"><path d="M0 0 H3.6 L0 3.6Z M8 0 V3.6 L4.4 0Z M8 8 H4.4 L8 4.4Z M0 8 V4.4 L3.6 8Z"/></g><g stroke="#222" stroke-width="1.1"><path d="M1 1 L3.2 3.2 M7 1 L4.8 3.2 M7 7 L4.8 4.8 M1 7 L3.2 4.8"/></g></svg>
<div class="t" style="left:603px;top:353.3px;font-size:8.5px;color:#3a8296;transform:scaleX(0.93);transform-origin:0 0;">テキスト</div>
<div class="a" style="left:639px;top:357px;width:153px;height:1px;background:#86aab7"></div>
<div class="t" style="left:603px;top:372.3px;font-size:8.5px;color:#444;transform:scaleX(0.93);transform-origin:0 0;">色</div>
<div class="a" style="left:665.5px;top:366.5px;width:108.2px;height:18px;background:#e4e3e5;border-radius:2px"></div>
<div class="a" style="left:668.5px;top:369.5px;width:12.5px;height:12.5px;background:#000;border:1px solid #dcdcdc;border-radius:1px"></div>
<div class="t" style="left:684.5px;top:372.1px;font-size:8.5px;color:#4a4a4a;transform:scaleX(0.94);transform-origin:0 0;">#000000</div>
<svg style="left:761.5px;top:374.0px" width="5" height="3" viewBox="0 0 5 3"><path d="M0.5 0.5 L2.5 2.5 L4.5 0.5" fill="none" stroke="#444" stroke-width="1.1"/></svg>
<div class="a" style="left:780px;top:372.5px;width:7px;height:7px;background:#4fbf80;border-radius:1px"></div>
<div class="t" style="left:603px;top:393.8px;font-size:8.5px;color:#444;transform:scaleX(0.93);transform-origin:0 0;">フォント名</div>
<div class="a" style="left:665.5px;top:388px;width:108.2px;height:18px;background:#e4e3e5;border-radius:2px"></div>
<div class="t" style="left:672px;top:393.6px;font-size:8.5px;color:#4a4a4a;transform:scaleX(0.94);transform-origin:0 0;">Arial</div>
<svg style="left:761.5px;top:395.5px" width="5" height="3" viewBox="0 0 5 3"><path d="M0.5 0.5 L2.5 2.5 L4.5 0.5" fill="none" stroke="#444" stroke-width="1.1"/></svg>
<div class="a" style="left:780px;top:394px;width:7px;height:7px;background:#777;border-radius:1px"></div>
<div class="t" style="left:603px;top:415.8px;font-size:8.5px;color:#444;transform:scaleX(0.93);transform-origin:0 0;">サイズ</div>
<div class="a" style="left:665.5px;top:410px;width:108.2px;height:18px;background:#e4e3e5;border-radius:2px"></div>
<div class="t" style="left:672px;top:415.6px;font-size:8.5px;color:#4a4a4a;transform:scaleX(0.94);transform-origin:0 0;">10pt</div>
<svg style="left:761.5px;top:417.5px" width="5" height="3" viewBox="0 0 5 3"><path d="M0.5 0.5 L2.5 2.5 L4.5 0.5" fill="none" stroke="#444" stroke-width="1.1"/></svg>
<div class="a" style="left:780px;top:416px;width:7px;height:7px;background:#777;border-radius:1px"></div>
<div class="t" style="left:603px;top:437.8px;font-size:8.5px;color:#444;transform:scaleX(0.93);transform-origin:0 0;">スタイル</div>
<div class="a" style="left:665.5px;top:432px;width:108.2px;height:18px;background:#e4e3e5;border-radius:2px"></div>
<div class="t" style="left:675px;top:437.6px;font-size:8.5px;color:#4a4a4a;transform:scaleX(0.94);transform-origin:0 0;">Normal</div>
<svg style="left:761.5px;top:439.5px" width="5" height="3" viewBox="0 0 5 3"><path d="M0.5 0.5 L2.5 2.5 L4.5 0.5" fill="none" stroke="#444" stroke-width="1.1"/></svg>
<div class="a" style="left:780px;top:438px;width:7px;height:7px;background:#777;border-radius:1px"></div>
<div class="t" style="left:603px;top:459.3px;font-size:8.5px;color:#444;transform:scaleX(0.93);transform-origin:0 0;">太さ</div>
<div class="a" style="left:665.5px;top:453.5px;width:108.2px;height:18px;background:#e4e3e5;border-radius:2px"></div>
<div class="t" style="left:672px;top:459.1px;font-size:8.5px;color:#4a4a4a;transform:scaleX(0.94);transform-origin:0 0;">Bold</div>
<svg style="left:761.5px;top:461.0px" width="5" height="3" viewBox="0 0 5 3"><path d="M0.5 0.5 L2.5 2.5 L4.5 0.5" fill="none" stroke="#444" stroke-width="1.1"/></svg>
<div class="a" style="left:780px;top:459.5px;width:7px;height:7px;background:#4fbf80;border-radius:1px"></div>
<div class="t" style="left:603px;top:481.3px;font-size:8.5px;color:#444;transform:scaleX(0.93);transform-origin:0 0;">文字飾り</div>
<div class="a" style="left:665.5px;top:475.5px;width:108.2px;height:18px;background:#e4e3e5;border-radius:2px"></div>
<div class="t" style="left:675px;top:481.1px;font-size:8.5px;color:#4a4a4a;transform:scaleX(0.94);transform-origin:0 0;">None</div>
<svg style="left:761.5px;top:483.0px" width="5" height="3" viewBox="0 0 5 3"><path d="M0.5 0.5 L2.5 2.5 L4.5 0.5" fill="none" stroke="#444" stroke-width="1.1"/></svg>
<div class="a" style="left:780px;top:481.5px;width:7px;height:7px;background:#777;border-radius:1px"></div>
<div class="t" style="left:603px;top:503.3px;font-size:8.5px;color:#444;transform:scaleX(0.84);transform-origin:0 0;">水平方向の整列</div>
<div class="a" style="left:665.5px;top:497.5px;width:108.2px;height:18px;background:#e4e3e5;border-radius:2px"></div>
<div class="t" style="left:675px;top:503.1px;font-size:8.5px;color:#4a4a4a;transform:scaleX(0.94);transform-origin:0 0;">General</div>
<svg style="left:761.5px;top:505.0px" width="5" height="3" viewBox="0 0 5 3"><path d="M0.5 0.5 L2.5 2.5 L4.5 0.5" fill="none" stroke="#444" stroke-width="1.1"/></svg>
<div class="a" style="left:780px;top:503.5px;width:7px;height:7px;background:#777;border-radius:1px"></div>
<div class="t" style="left:603px;top:525.3px;font-size:8.5px;color:#444;transform:scaleX(0.93);transform-origin:0 0;">均等割付</div>
<div class="a" style="left:665.5px;top:519.5px;width:108.2px;height:18px;background:#e4e3e5;border-radius:2px"></div>
<div class="t" style="left:675px;top:525.1px;font-size:8.5px;color:#4a4a4a;transform:scaleX(0.94);transform-origin:0 0;">Auto</div>
<svg style="left:761.5px;top:527.0px" width="5" height="3" viewBox="0 0 5 3"><path d="M0.5 0.5 L2.5 2.5 L4.5 0.5" fill="none" stroke="#444" stroke-width="1.1"/></svg>
<div class="a" style="left:780px;top:525.5px;width:7px;height:7px;background:#777;border-radius:1px"></div>
<div class="a" style="left:665.5px;top:541px;width:108.2px;height:3px;background:#e4e3e5"></div>
<div class="a" style="left:32.8px;top:543px;width:767.2px;height:20px;background:#efeef0"></div>
<div class="a" style="left:593.5px;top:544px;width:18px;height:19px;background:#e2e1e3"></div>
<svg style="left:598.5px;top:549px" width="9" height="9" viewBox="0 0 9 9"><rect x="0" y="0" width="9" height="9" rx="1.2" fill="#555"/><g stroke="#e2e1e3" stroke-width="0.9"><line x1="3.1" y1="1" x2="3.1" y2="8"/><line x1="5.9" y1="1" x2="5.9" y2="8"/><line x1="1" y1="3.1" x2="8" y2="3.1"/><line x1="1" y1="5.9" x2="8" y2="5.9"/></g></svg>
<svg style="left:617.5px;top:549.4px" width="8.5" height="8.6" viewBox="0 0 8.5 8.6"><path d="M1.2 0 V4.5 Q1.2 7.6 4.25 7.6 Q7.3 7.6 7.3 4.5 V0" fill="none" stroke="#222" stroke-width="1.6"/><g stroke="#efeef0" stroke-width="0.8"><line x1="0" y1="1.6" x2="2.4" y2="1.6"/><line x1="6.1" y1="1.6" x2="8.5" y2="1.6"/></g></svg>
<div class="a" style="left:632px;top:548px;width:1px;height:12px;background:#dcdbdd"></div>
<div class="a" style="left:638px;top:553.2px;width:6.3px;height:1.3px;background:#444"></div>
<div class="t" style="left:655.3px;top:549.5px;font-size:7.8px;color:#666;transform:scaleX(0.95);transform-origin:0 0;">100%</div>
<div class="a" style="left:685px;top:553.2px;width:6px;height:1.3px;background:#333"></div>
<div class="a" style="left:687.35px;top:550.5px;width:1.3px;height:6.7px;background:#333"></div>
<div class="a" style="left:697.3px;top:548px;width:1px;height:12px;background:#dcdbdd"></div>
<div class="t" style="left:704px;top:549.5px;font-size:7.8px;color:#666;">in</div>
<svg style="left:722px;top:549.5px" width="8.5" height="8.5" viewBox="0 0 8.5 8.5"><g fill="none" stroke="#333" stroke-width="1.1"><path d="M4.25 0.6 L6 1.6 L7.6 2.3 L7.6 4.25 L7.6 6.2 L6 6.9 L4.25 7.9 L2.5 6.9 L0.9 6.2 L0.9 4.25 L0.9 2.3 L2.5 1.6 Z"/><circle cx="4.25" cy="4.25" r="1.6"/></g></svg>
<div class="t" style="left:735.7px;top:548.8px;font-size:8.5px;color:#555;transform:scaleX(0.86);transform-origin:0 0;">プロパティモード</div>
</body></html>
